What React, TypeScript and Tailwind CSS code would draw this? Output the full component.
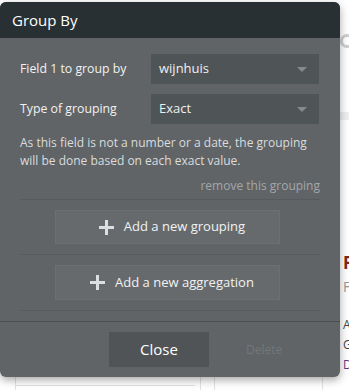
import React from "react";

function Plus() {
  return (
    <svg width="15" height="15" viewBox="0 0 15 15" className="shrink-0">
      <rect x="6" y="0" width="3" height="15" fill="#dcdedf" />
      <rect x="0" y="6" width="15" height="3" fill="#dcdedf" />
    </svg>
  );
}

function Select({ value }: { value: string }) {
  return (
    <div className="flex h-[30px] w-[168px] items-center justify-between bg-[#4f5457] pl-[8px] pr-[12px] text-[13px] text-[#f0f0f0]">
      <span>{value}</span>
      <svg width="10" height="5" viewBox="0 0 10 5">
        <polygon points="0,0 10,0 5,5" fill="#868b8e" />
      </svg>
    </div>
  );
}

export default function App() {
  return (
    <div
      className="relative h-[390px] w-[349px] overflow-hidden bg-white"
      style={{ fontFamily: '"Open Sans", sans-serif' }}
    >
      {/* background page content */}
      <div className="absolute left-[340px] top-[34px] h-[14px] w-[14px] rounded-full border-[3px] border-[#cfcfcf]" />
      <div className="absolute left-[338px] top-[112px] h-[8px] w-[11px] bg-[#efefef]" />
      <div className="absolute left-[343px] top-[254px] text-[17px] font-bold leading-none text-[#7a2a1a]">F</div>
      <div className="absolute left-[343px] top-[280px] text-[14px] leading-none text-[#999]">F</div>
      <div className="absolute left-[343px] top-[319px] text-[12px] leading-none text-[#444]">A</div>
      <div className="absolute left-[343px] top-[339px] text-[12px] leading-none text-[#444]">G</div>
      <div className="absolute left-[343px] top-[359px] text-[12px] leading-none text-[#5a3a8a]">D</div>
      <div className="absolute left-[15px] top-[370px] h-[20px] w-px bg-[#e2e2e2]" />
      <div className="absolute left-[200px] top-[370px] h-[20px] w-px bg-[#e2e2e2]" />
      <div className="absolute left-[214px] top-[370px] h-[20px] w-px bg-[#e2e2e2]" />
      <div className="absolute left-[322px] top-[370px] h-[20px] w-px bg-[#e2e2e2]" />
      <div className="absolute left-[15px] top-[385px] h-px w-[180px] bg-[#e2e2e2]" />

      {/* modal panel */}
      <div className="absolute left-0 top-[2px] flex w-[340px] flex-col overflow-hidden rounded-[6px] bg-[#606467] shadow-[0_3px_8px_rgba(0,0,0,0.35)]">
        <div className="flex h-[36px] items-center bg-[#293033] pl-[12px] text-[15px] text-white">
          Group By
        </div>
        <div className="flex flex-col px-[20px] pt-[16px]">
          <div className="flex items-center justify-between pr-[1px]">
            <span className="text-[12.3px] text-[#f2f2f2]">Field 1 to group by</span>
            <Select value="wijnhuis" />
          </div>
          <div className="mt-[10px] flex items-center justify-between pr-[1px]">
            <span className="text-[12.3px] text-[#f2f2f2]">Type of grouping</span>
            <Select value="Exact" />
          </div>
          <p className="mt-[10px] text-[12px] leading-[18px] text-[#dadcdd]">
            As this field is not a number or a date, the grouping will be done based on each exact value.
          </p>
          <div className="mt-[7px] text-right text-[12px] leading-[18px] text-[#a3a7a9]">
            remove this grouping
          </div>
          <div className="mt-[4px] h-px bg-[#575b5e]" />
          <div className="flex justify-center py-[10px]">
            <div className="mr-[5px] flex h-[34px] w-[225px] items-center justify-center gap-[10px] border border-[#6c7073] bg-[#666a6d] pl-[9px] text-[13px] text-[#f2f2f2]">
              <Plus />
              <span>Add a new grouping</span>
            </div>
          </div>
          <div className="h-px bg-[#575b5e]" />
          <div className="flex justify-center py-[10px]">
            <div className="mr-[5px] flex h-[35px] w-[225px] items-center justify-center gap-[10px] border border-[#6c7073] bg-[#666a6d] pl-[9px] text-[13px] text-[#f2f2f2]">
              <Plus />
              <span>Add a new aggregation</span>
            </div>
          </div>
          <div className="h-px bg-[#575b5e]" />
        </div>
        <div className="mt-[10px] h-px bg-[#4b4f52]" />
        <div className="flex h-[55px] items-start pt-[10px]">
          <div className="ml-[109px] flex h-[35px] w-[100px] items-center justify-center bg-[#505457] text-[15px] text-white">
            Close
          </div>
          <div className="ml-[37px] flex h-[35px] items-center text-[12px] text-[#72777a]">
            Delete
          </div>
        </div>
      </div>
    </div>
  );
}
